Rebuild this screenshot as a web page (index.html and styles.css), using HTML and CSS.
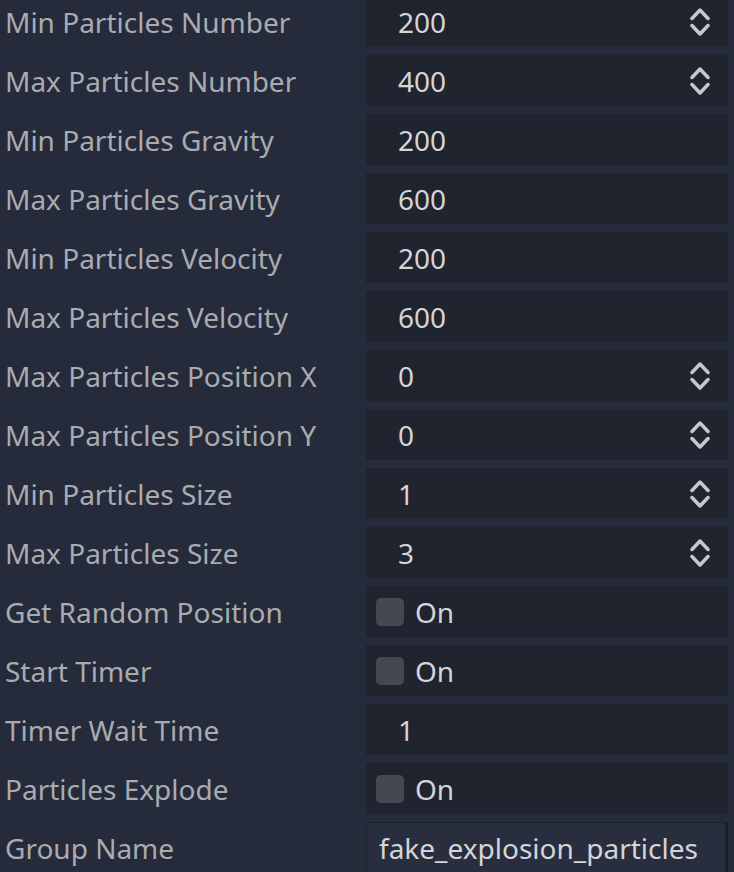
FILE: index.html
```html
<!DOCTYPE html>
<html>
<head>
<meta charset="utf-8">
<link rel="stylesheet" href="styles.css">
</head>
<body>
<div class="inspector">
  <div class="row"><div class="label">Min Particles Number</div><div class="field"><span class="value">200</span><svg class="spin" viewBox="0 0 20 30" width="20" height="30"><path d="M2 11.5 L10 3 L18 11.5 M2 18.5 L10 27 L18 18.5"/></svg></div></div>
  <div class="row"><div class="label">Max Particles Number</div><div class="field"><span class="value">400</span><svg class="spin" viewBox="0 0 20 30" width="20" height="30"><path d="M2 11.5 L10 3 L18 11.5 M2 18.5 L10 27 L18 18.5"/></svg></div></div>
  <div class="row"><div class="label">Min Particles Gravity</div><div class="field"><span class="value">200</span></div></div>
  <div class="row"><div class="label">Max Particles Gravity</div><div class="field"><span class="value">600</span></div></div>
  <div class="row"><div class="label">Min Particles Velocity</div><div class="field"><span class="value">200</span></div></div>
  <div class="row"><div class="label">Max Particles Velocity</div><div class="field"><span class="value">600</span></div></div>
  <div class="row"><div class="label">Max Particles Position X</div><div class="field"><span class="value">0</span><svg class="spin" viewBox="0 0 20 30" width="20" height="30"><path d="M2 11.5 L10 3 L18 11.5 M2 18.5 L10 27 L18 18.5"/></svg></div></div>
  <div class="row"><div class="label">Max Particles Position Y</div><div class="field"><span class="value">0</span><svg class="spin" viewBox="0 0 20 30" width="20" height="30"><path d="M2 11.5 L10 3 L18 11.5 M2 18.5 L10 27 L18 18.5"/></svg></div></div>
  <div class="row"><div class="label">Min Particles Size</div><div class="field"><span class="value">1</span><svg class="spin" viewBox="0 0 20 30" width="20" height="30"><path d="M2 11.5 L10 3 L18 11.5 M2 18.5 L10 27 L18 18.5"/></svg></div></div>
  <div class="row"><div class="label">Max Particles Size</div><div class="field"><span class="value">3</span><svg class="spin" viewBox="0 0 20 30" width="20" height="30"><path d="M2 11.5 L10 3 L18 11.5 M2 18.5 L10 27 L18 18.5"/></svg></div></div>
  <div class="row"><div class="label">Get Random Position</div><div class="field check"><span class="box"></span><span class="value">On</span></div></div>
  <div class="row"><div class="label">Start Timer</div><div class="field check"><span class="box"></span><span class="value">On</span></div></div>
  <div class="row"><div class="label">Timer Wait Time</div><div class="field"><span class="value">1</span></div></div>
  <div class="row"><div class="label">Particles Explode</div><div class="field check"><span class="box"></span><span class="value">On</span></div></div>
  <div class="row"><div class="label">Group Name</div><div class="field text"><span class="value">fake_explosion_particles</span></div></div>
</div>
</body>
</html>
```
FILE: styles.css
```css
html, body {
  margin: 0;
  padding: 0;
  background: #252b3a;
  overflow: hidden;
}
body {
  font-family: "Noto Sans", "Open Sans", sans-serif;
  font-size: 28px;
}
.inspector {
  margin-top: -4px;
  display: flex;
  flex-direction: column;
  gap: 8px;
  padding-right: 6px;
}
.row {
  display: grid;
  grid-template-columns: 366px 1fr;
  height: 51px;
}
.label {
  display: flex;
  align-items: center;
  padding-left: 5px;
  color: #a9abb0;
  white-space: nowrap;
  line-height: 1;
}
.field {
  display: flex;
  align-items: center;
  background: #20242f;
  padding-left: 32px;
  padding-right: 18px;
  color: #d3d5d9;
  line-height: 1;
}
.field .value {
  flex: 1;
  white-space: nowrap;
}
.spin {
  flex: none;
}
.spin path {
  fill: none;
  stroke: #c6c8cc;
  stroke-width: 3.5;
  stroke-linecap: round;
  stroke-linejoin: round;
}
.field.check {
  padding-left: 10px;
  gap: 11px;
}
.box {
  width: 28px;
  height: 28px;
  border-radius: 5px;
  background: #444852;
  flex: none;
}
.field.text {
  background: #282e3e;
  border: 1px solid #1c202a;
  border-right-width: 3px;
  padding-left: 12px;
  box-sizing: border-box;
}
```
